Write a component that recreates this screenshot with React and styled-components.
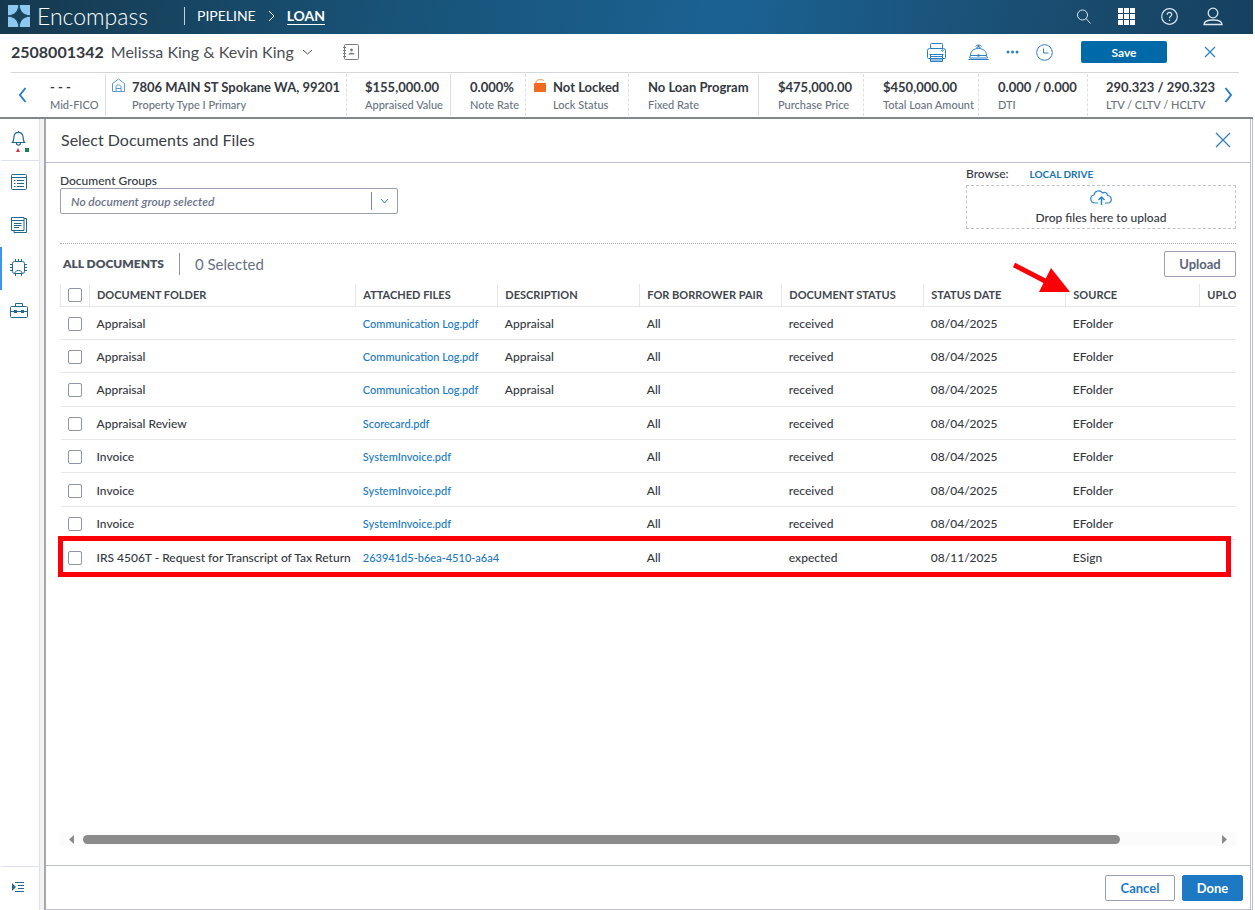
import React, { useState } from "react";
import styled, { createGlobalStyle } from "styled-components";

const GlobalStyle = createGlobalStyle`
  * {
    box-sizing: border-box;
  }

  body {
    margin: 0;
    background: #fff;
    color: #35393f;
    font-family: "Lato", "Liberation Sans", sans-serif;
    font-size: 12px;
    font-weight: 500;
    line-height: 16px;
  }

  button,
  select,
  input {
    font-family: inherit;
    margin: 0;
  }

  svg {
    flex: none;
  }
`;

const Page = styled.div`
  display: flex;
  flex-direction: column;
  min-height: 100vh;
  padding-right: 2px;
`;

const TopBar = styled.header`
  display: flex;
  align-items: center;
  height: 34px;
  padding: 0 19px 2px 8px;
  color: #fff;
  background: linear-gradient(100deg, #16394f 0%, #185378 32%, #1b6293 58%, #1a4e72 82%, #16405f 100%);
`;

const Brand = styled.div`
  display: flex;
  align-items: center;
  gap: 7px;
  width: 176px;
  font-size: 23px;
  font-weight: 300;
  line-height: 32px;
`;

const Crumbs = styled.nav`
  display: flex;
  align-items: center;
  gap: 12px;
  height: 18px;
  padding-left: 12px;
  border-left: 1px solid #c5d3de;
  font-size: 14px;
`;

const Crumb = styled.a`
  color: #fff;
  line-height: 17px;
  text-decoration: none;
  font-weight: ${({ $current }) => ($current ? 700 : 400)};
  border-bottom: 1px solid ${({ $current }) => ($current ? "#fff" : "transparent")};
`;

const Spacer = styled.div`
  flex: 1;
`;

const IconButton = styled.button`
  display: flex;
  align-items: center;
  justify-content: center;
  flex: none;
  width: ${({ $width }) => $width || 43}px;
  height: 30px;
  padding: 0;
  border: none;
  background: none;
  color: ${({ $color }) => $color || "#2d7fc4"};
`;

const LoanBar = styled.div`
  display: flex;
  align-items: center;
  height: 39px;
  margin: 0 14px 0 11px;
  padding: 0 8px 2px 0;
  border-bottom: 1px solid #d4d7da;
`;

const LoanNumber = styled.span`
  font-size: 16px;
  font-weight: 700;
  line-height: 20px;
  margin-right: 7px;
`;

const Borrower = styled.button`
  display: flex;
  align-items: center;
  gap: 8px;
  padding: 0;
  border: none;
  background: none;
  color: #4a4e54;
  font-size: 16px;
  line-height: 20px;
  margin-right: 22px;
`;

const SaveButton = styled.button`
  width: 86px;
  height: 22px;
  margin: 0 21px 0 18px;
  border: none;
  border-radius: 2px;
  background: #006aa9;
  color: #fff;
  font-size: 12px;
  font-weight: 700;
`;

const Summary = styled.section`
  display: flex;
  align-items: center;
  height: 46px;
  border-bottom: 2px solid #80878d;
  padding: 0 15px 0 2px;
`;

const SummaryList = styled.div`
  display: grid;
  grid-template-columns: 64fr 241fr 104fr 75fr 103fr 130fr 105fr 115fr 109fr 130fr;
  flex: 1;
  min-width: 0;
  height: 42px;
`;

const SummaryCell = styled.div`
  display: flex;
  gap: 7px;
  min-width: 0;
  padding: 4px 0 0 ${({ $pad }) => $pad}px;
  border-right: 1px ${({ $line }) => $line || "dashed"} #dcdfe2;
  white-space: nowrap;

  &:last-child {
    border-right: none;
  }
`;

const SummaryValue = styled.div`
  font-size: 13px;
  font-weight: 700;
  line-height: 18px;
`;

const SummaryLabel = styled.div`
  color: #6a747f;
  font-size: 11px;
  line-height: 18px;
`;

const Body = styled.div`
  display: flex;
  flex: 1;
`;

const Rail = styled.nav`
  display: flex;
  flex-direction: column;
  flex: none;
  width: 40px;
  border-right: 1px solid #dfe1e6;
`;

const RailItem = styled.button`
  display: flex;
  align-items: center;
  justify-content: center;
  width: 39px;
  height: 43px;
  padding: 0 4px 2px 0;
  border: none;
  border-left: 2px solid ${({ $active }) => ($active ? "#3d96e8" : "transparent")};
  background: none;
  color: #23698f;
`;

const AlertItem = styled(RailItem)`
  height: 42px;
  padding: 5px 4px 0 0;
  border-bottom: 1px solid #dfe1ec;
`;

const CollapseItem = styled(RailItem)`
  height: 44px;
  margin-top: auto;
  padding: 0 6px 4px 0;
  border-top: 1px solid #dfe1ec;
`;

const PanelArea = styled.div`
  display: flex;
  flex: 1;
  min-width: 0;
  background: #f3f3f4;
`;

const Panel = styled.main`
  display: flex;
  flex-direction: column;
  flex: 1;
  min-width: 0;
  margin-left: 4px;
  border-left: 2px solid #a4a8ae;
  border-right: 3px double #b9c0d2;
  border-bottom: 1px solid #b9bfcc;
  background: #fff;
`;

const PanelHeader = styled.div`
  display: flex;
  align-items: center;
  justify-content: space-between;
  height: 44px;
  padding: 0 6px 1px 15px;
  border-bottom: 1px solid #bcc1d0;
`;

const Title = styled.h1`
  margin: 0;
  color: #3c4046;
  font-size: 16px;
  font-weight: 400;
  line-height: 20px;
`;

const Content = styled.div`
  display: flex;
  flex: 1;
  flex-direction: column;
  padding: 0 14px 19px 14px;
`;

const Source = styled.div`
  display: flex;
  justify-content: space-between;
  height: 81px;
  border-bottom: 1px dotted #a9adb3;
`;

const Field = styled.div`
  width: 338px;
  padding-top: 11px;

  label {
    display: block;
    line-height: 14px;
  }
`;

const SelectBox = styled.div`
  position: relative;
  height: 26px;

  select {
    width: 100%;
    height: 26px;
    padding: 0 40px 0 10px;
    appearance: none;
    border: 1px solid #989fb3;
    border-radius: 2px;
    background: #fff;
    color: #6b7489;
    font-size: 12px;
    font-style: italic;
    font-weight: 600;
  }
`;

const SelectMark = styled.span`
  position: absolute;
  top: 4px;
  right: 1px;
  display: flex;
  align-items: center;
  justify-content: center;
  width: 26px;
  height: 18px;
  border-left: 1px solid #7c849c;
  color: #2d7fc4;
  pointer-events: none;
`;

const Browse = styled.div`
  width: 270px;
  padding-top: 3px;
`;

const BrowseRow = styled.div`
  display: flex;
  gap: 21px;
  height: 19px;

  a {
    color: #1575ae;
    font-size: 10px;
    font-weight: 700;
    text-decoration: none;
  }
`;

const DropZone = styled.div`
  display: flex;
  flex-direction: column;
  align-items: center;
  gap: 4px;
  height: 44px;
  padding-top: 4px;
  border: 1px dashed #bfc3cf;
`;

const ListHeader = styled.div`
  display: flex;
  align-items: center;
  height: 40px;
  padding-left: 3px;
`;

const ListTitle = styled.h2`
  margin: 0 15px 0 0;
  color: #4b525c;
  font-size: 12px;
  font-weight: 800;
`;

const Selected = styled.span`
  padding-left: 15px;
  border-left: 1px solid #8d94a6;
  color: #697184;
  font-size: 15px;
  font-weight: 400;
  line-height: 22px;
`;

const BoxButton = styled.button`
  width: ${({ $width }) => $width}px;
  height: 26px;
  padding: 0;
  border: 1px solid ${({ $primary }) => ($primary ? "#1e79c4" : "#989fb3")};
  border-radius: 2px;
  background: ${({ $primary }) => ($primary ? "#1e79c4" : "#fff")};
  color: ${({ $primary, $color }) => ($primary ? "#fff" : $color)};
  font-size: 13px;
  font-weight: 700;
`;

const TableArea = styled.div`
  position: relative;
`;

const TableClip = styled.div`
  overflow: hidden;
`;

const Table = styled.table`
  width: 109%;
  height: 289px;
  border-collapse: collapse;
  table-layout: fixed;

  th,
  td {
    border-bottom: 1px solid #e6e7e9;
    text-align: left;
    white-space: nowrap;
  }

  th {
    height: 22px;
    padding: 0 0 0 7px;
    border-left: 1px solid #e6e7e9;
    color: #41464e;
    font-size: 11px;
    font-weight: 700;
  }

  td {
    height: 33px;
    padding: 2px 0 0 7px;
  }

  tbody tr:last-child td {
    border-bottom: none;
  }

  td a {
    color: #2079c2;
    font-size: 11px;
    text-decoration: none;
  }
`;

const Col = styled.col`
  width: ${({ $width }) => ($width ? `${$width}px` : "auto")};
`;

const Check = styled.input`
  display: block;
  width: 14px;
  height: 14px;
  appearance: none;
  border: 1px solid #8e95ab;
  border-radius: 2px;
  background: #fff;

  &:checked {
    background: #1e79c4;
  }
`;

const Highlight = styled.div`
  position: absolute;
  top: 252px;
  left: -2px;
  right: 5px;
  height: 41px;
  border: 5px solid #fb0007;
  pointer-events: none;
`;

const Pointer = styled.svg`
  position: absolute;
  top: -22px;
  right: 165px;
`;

const ScrollBar = styled.div`
  display: flex;
  align-items: center;
  gap: 9px;
  height: 14px;
  margin-top: auto;
  padding: 0 9px;
  background: #fbfbfb;
`;

const Track = styled.div`
  flex: 1;
  height: 9px;
`;

const Thumb = styled.div`
  width: calc(100% / 1.09);
  height: 9px;
  border-radius: 5px;
  background: #8b8b8b;
`;

const Footer = styled.footer`
  display: flex;
  align-items: center;
  justify-content: flex-end;
  gap: 7px;
  height: 44px;
  padding: 0 7px;
  border-top: 1px solid #bcc1d0;
`;

const Icon = ({ size = 20, width, height, children, sw = 1 }) => (
  <svg
    width={width || size}
    height={height || size}
    viewBox={`0 0 ${width || size} ${height || size}`}
    fill="none"
    stroke="currentColor"
    strokeWidth={sw}
    aria-hidden="true"
  >
    {children}
  </svg>
);

const LogoMark = () => (
  <svg width="22" height="22" viewBox="0 0 22 22" aria-hidden="true">
    <rect width="22" height="22" fill="#8cc8ef" />
    <path
      d="M11 0C12 7 15 10 22 11C15 12 12 15 11 22C10 15 7 12 0 11C7 10 10 7 11 0Z"
      fill="#17425c"
      stroke="#17425c"
      strokeWidth="1"
    />
  </svg>
);

const ChevronDown = ({ width = 11 }) => (
  <Icon width={width} height={6}>
    <path d={`M1 1L${width / 2} 5L${width - 1} 1`} />
  </Icon>
);

const Cross = ({ size }) => (
  <Icon size={size} sw={1.2}>
    <path d={`M1 1L${size - 1} ${size - 1}M${size - 1} 1L1 ${size - 1}`} />
  </Icon>
);

const SearchIcon = () => (
  <Icon size={16}>
    <circle cx="6.5" cy="7" r="5" />
    <path d="M10 10.5L14.5 15.5" />
  </Icon>
);

const GridIcon = () => (
  <Icon size={17}>
    <path
      d="M0 0h5v5H0zM6 0h5v5H6zM12 0h5v5h-5zM0 6h5v5H0zM6 6h5v5H6zM12 6h5v5h-5zM0 12h5v5H0zM6 12h5v5H6zM12 12h5v5h-5z"
      fill="currentColor"
      stroke="none"
    />
  </Icon>
);

const HelpIcon = () => (
  <Icon size={17} sw={1.2}>
    <circle cx="8.5" cy="8.5" r="7.8" />
    <path d="M6.2 6.8C6.2 3.6 10.9 3.8 10.8 6.6C10.8 8.3 8.5 8.3 8.5 10.3" />
    <path d="M8.5 11.6v1.4" />
  </Icon>
);

const UserIcon = () => (
  <Icon width={20} height={19} sw={1.3}>
    <circle cx="10" cy="6" r="4.8" />
    <path d="M1 17.5C1 14.5 4 13 10 13C16 13 19 14.5 19 17.5Z" />
  </Icon>
);

const ContactIcon = () => (
  <Icon size={16}>
    <rect x="1.5" y="0.5" width="14" height="15" rx="1" />
    <path d="M0 3.5h3M0 6.5h3M0 9.5h3M0 12.5h3" />
    <circle cx="8.5" cy="6" r="1.4" fill="currentColor" stroke="none" />
    <path d="M5.5 10.5C5.5 8 11.5 8 11.5 10.5Z" fill="currentColor" stroke="none" />
  </Icon>
);

const PrinterIcon = () => (
  <Icon width={19} height={19}>
    <path d="M3.5 5.5V1.5a1 1 0 0 1 1-1h10a1 1 0 0 1 1 1V5.5M3.5 15.5h-2a1 1 0 0 1-1-1v-7a2 2 0 0 1 2-2h14a2 2 0 0 1 2 2v7a1 1 0 0 1-1 1h-2" />
    <path d="M2.5 11.5h14M3.5 11.5h12v7h-12zM3.5 13.5h12M3.5 15.5h12M3.5 17h12" />
    <circle cx="15.5" cy="7.5" r="0.8" />
  </Icon>
);

const ServiceBellIcon = () => (
  <Icon width={21} height={17}>
    <path d="M2.5 11.5C2.5 7.5 5.500 4.500 10.500 4.500S18.500 7.500 18.500 11.500M2.500 11.500h16l1 2.500h-18zM0.500 15.500h20M9 4.500V3h3v1.500M7.500 2.500C9 0.500 12 0.500 13.500 2.500" />
    <circle cx="10.5" cy="2" r="1" fill="currentColor" stroke="none" />
    <circle cx="10.5" cy="11.5" r="1.3" fill="currentColor" stroke="none" />
  </Icon>
);

const DotsIcon = () => (
  <Icon width={13} height={4}>
    <g fill="currentColor" stroke="none">
      <circle cx="2" cy="2" r="1.5" />
      <circle cx="6.5" cy="2" r="1.5" />
      <circle cx="11" cy="2" r="1.5" />
    </g>
  </Icon>
);

const ClockIcon = () => (
  <Icon size={17}>
    <circle cx="8.5" cy="8.5" r="7.8" />
    <path d="M7.5 4.5v4.500h5" />
  </Icon>
);

const SideArrow = ({ right }) => (
  <Icon width={9} height={16} sw={2}>
    <path d={right ? "M1.5 1L7 8L1.5 15" : "M7.5 1L2 8L7.5 15"} />
  </Icon>
);

const HouseIcon = () => (
  <Icon width={13} height={15}>
    <g stroke="#5b9bd5">
      <path d="M0.5 5.5L6.5 1L12.5 5.5V13.5H0.5Z" />
      <path d="M4 13.5V8.5C4 6.5 9 6.5 9 8.5V13.5M4 10.5h5" />
    </g>
  </Icon>
);

const UnlockIcon = () => (
  <Icon width={12} height={15}>
    <rect y="5" width="12" height="9" rx="1" fill="#f26a21" stroke="none" />
    <path d="M2 5V4C2 1 9.5 1 10 3" stroke="#f58d55" />
  </Icon>
);

const AlertIcon = () => (
  <Icon width={20} height={24}>
    <path
      d="M3.500 12.500C5 11 4.800 8 5 6.500C5.300 3.500 7.200 2.300 9.500 2.300S13.700 3.500 14 6.500C14.200 8 14 11 15.500 12.500ZM7.500 13C7.500 15.800 11.500 15.800 11.500 13M9.500 1v1.300"
      strokeWidth="1.2"
    />
    <path d="M9 18L7 22h4z" fill="#d8304a" stroke="none" />
    <path d="M16 18h4v4h-4z" fill="#178254" stroke="none" />
  </Icon>
);

const FormIcon = () => (
  <Icon size={16}>
    <rect x="0.5" y="0.5" width="15" height="15" rx="1" />
    <path d="M0.5 3.5h15M6 6.5h7M6 9.5h7M6 12.5h7M3 6.5h1.5M3 9.5h1.5M3 12.5h1.5" />
  </Icon>
);

const DocsIcon = () => (
  <Icon size={16}>
    <path d="M0.5 0.5h12.5v13h-12.5zM0.5 3.5h12.5M3 6.5h7.5M3 8.5h7.5M3 10.5h5M13 1.5h2.5v14h-12.5v-2" />
  </Icon>
);

const ChipIcon = () => (
  <Icon size={17}>
    <rect x="2.5" y="2.5" width="12" height="12" rx="2" />
    <path d="M5.5 0v2.5M8.5 0v2.5M11.5 0v2.5M0 5.5h2.5M0 8.5h2.5M0 11.5h2.5M14.5 5.5h2.5M14.5 8.5h2.5M14.5 11.5h2.5M5.5 14.5v2.5M11.5 14.5v2.5" />
    <path d="M5 14.5C4.500 10.500 12.500 10.500 12 14.500" />
  </Icon>
);

const CaseIcon = () => (
  <Icon width={18} height={15}>
    <rect x="0.5" y="3.5" width="17" height="11" rx="1" />
    <path d="M5.5 3.5v-3h7v3M0.5 8.5h17" />
    <path d="M4 7h3v3h-3zM11 7h3v3h-3z" fill="currentColor" stroke="none" />
  </Icon>
);

const ExpandIcon = () => (
  <Icon width={12} height={10}>
    <path d="M0 1L4 5L0 9Z" fill="currentColor" stroke="none" />
    <path d="M3 0.5h9M6 3.5h6M6 6.5h6M3 9.5h9" />
  </Icon>
);

const CloudIcon = () => (
  <Icon width={22} height={16}>
    <g stroke="#2d86cb">
      <path
        d="M8 13H5.500C-0.500 13 -0.500 5.500 4 5C4.500 0.500 10.500 -0.500 12.500 3C15 1.500 17.500 3 17.500 5.500C22.500 6 22.500 13 18 13H15"
        strokeWidth="1.2"
      />
      <path d="M11.5 15V7.5M8.5 10L11.5 7L14.5 10" strokeWidth="1.5" />
    </g>
  </Icon>
);

const summary = [
  { value: "- - -", label: "Mid-FICO", pad: 8, line: "solid" },
  {
    value: "7806 MAIN ST Spokane WA, 99201",
    label: "Property Type I Primary",
    pad: 6,
    icon: <HouseIcon />,
  },
  { value: "$155,000.00", label: "Appraised Value", pad: 18, line: "solid" },
  { value: "0.000%", label: "Note Rate", pad: 19 },
  { value: "Not Locked", label: "Lock Status", pad: 8, icon: <UnlockIcon /> },
  { value: "No Loan Program", label: "Fixed Rate", pad: 19, line: "solid" },
  { value: "$475,000.00", label: "Purchase Price", pad: 19 },
  { value: "$450,000.00", label: "Total Loan Amount", pad: 19 },
  { value: "0.000 / 0.000", label: "DTI", pad: 19 },
  { value: "290.323 / 290.323", label: "LTV / CLTV / HCLTV", pad: 18 },
];

const columns = [
  { title: "DOCUMENT FOLDER" },
  { title: "ATTACHED FILES", width: 142 },
  { title: "DESCRIPTION", width: 142 },
  { title: "FOR BORROWER PAIR", width: 142 },
  { title: "DOCUMENT STATUS", width: 142 },
  { title: "STATUS DATE", width: 142 },
  { title: "SOURCE", width: 134 },
  { title: "UPLO", width: 142 },
];

const documents = [
  ["Appraisal", "Communication Log.pdf", "Appraisal", "All", "received", "08/04/2025", "EFolder"],
  ["Appraisal", "Communication Log.pdf", "Appraisal", "All", "received", "08/04/2025", "EFolder"],
  ["Appraisal", "Communication Log.pdf", "Appraisal", "All", "received", "08/04/2025", "EFolder"],
  ["Appraisal Review", "Scorecard.pdf", "", "All", "received", "08/04/2025", "EFolder"],
  ["Invoice", "SystemInvoice.pdf", "", "All", "received", "08/04/2025", "EFolder"],
  ["Invoice", "SystemInvoice.pdf", "", "All", "received", "08/04/2025", "EFolder"],
  ["Invoice", "SystemInvoice.pdf", "", "All", "received", "08/04/2025", "EFolder"],
  [
    "IRS 4506T - Request for Transcript of Tax Return",
    "263941d5-b6ea-4510-a6a4",
    "",
    "All",
    "expected",
    "08/11/2025",
    "ESign",
  ],
];

const DocumentTable = ({ selected, toggle, toggleAll }) => (
  <Table>
    <colgroup>
      <Col $width={29} />
      {columns.map((column) => (
        <Col key={column.title} $width={column.width} />
      ))}
    </colgroup>
    <thead>
      <tr>
        <th>
          <Check
            type="checkbox"
            aria-label="Select all"
            checked={selected.length === documents.length}
            onChange={toggleAll}
          />
        </th>
        {columns.map((column) => (
          <th key={column.title}>{column.title}</th>
        ))}
      </tr>
    </thead>
    <tbody>
      {documents.map(([folder, file, ...rest], row) => (
        <tr key={row}>
          <td>
            <Check
              type="checkbox"
              aria-label={`Select ${folder}`}
              checked={selected.includes(row)}
              onChange={() => toggle(row)}
            />
          </td>
          <td>{folder}</td>
          <td>
            <a href="#file">{file}</a>
          </td>
          {rest.map((text, i) => (
            <td key={i}>{text}</td>
          ))}
          <td />
        </tr>
      ))}
    </tbody>
  </Table>
);

const App = () => {
  const [selected, setSelected] = useState([]);

  const toggle = (row) =>
    setSelected((rows) => (rows.includes(row) ? rows.filter((r) => r !== row) : [...rows, row]));

  const toggleAll = () =>
    setSelected((rows) => (rows.length === documents.length ? [] : documents.map((_, i) => i)));

  return (
    <Page>
      <GlobalStyle />
      <TopBar>
        <Brand>
          <LogoMark />
          Encompass
        </Brand>
        <Crumbs>
          <Crumb href="#pipeline">PIPELINE</Crumb>
          <Icon width={7} height={12}>
            <path d="M1 1L6 6L1 11" />
          </Icon>
          <Crumb href="#loan" $current>
            LOAN
          </Crumb>
        </Crumbs>
        <Spacer />
        <IconButton $color="#dbe6ee" aria-label="Search">
          <SearchIcon />
        </IconButton>
        <IconButton $color="#fff" aria-label="Apps">
          <GridIcon />
        </IconButton>
        <IconButton $color="#dbe6ee" aria-label="Help">
          <HelpIcon />
        </IconButton>
        <IconButton $color="#dbe6ee" aria-label="Account">
          <UserIcon />
        </IconButton>
      </TopBar>

      <LoanBar>
        <LoanNumber>2508001342</LoanNumber>
        <Borrower>
          Melissa King &amp; Kevin King
          <ChevronDown />
        </Borrower>
        <IconButton $width={32} $color="#777b80" aria-label="Contacts">
          <ContactIcon />
        </IconButton>
        <Spacer />
        <IconButton $width={42} aria-label="Print">
          <PrinterIcon />
        </IconButton>
        <IconButton $width={42} aria-label="Services">
          <ServiceBellIcon />
        </IconButton>
        <IconButton $width={26} aria-label="More">
          <DotsIcon />
        </IconButton>
        <IconButton $width={38} aria-label="History">
          <ClockIcon />
        </IconButton>
        <SaveButton>Save</SaveButton>
        <IconButton aria-label="Close loan">
          <Cross size={12} />
        </IconButton>
      </LoanBar>

      <Summary>
        <IconButton $width={40} aria-label="Previous">
          <SideArrow />
        </IconButton>
        <SummaryList>
          {summary.map(({ value, label, pad, line, icon }) => (
            <SummaryCell key={label} $pad={pad} $line={line}>
              {icon}
              <div>
                <SummaryValue>{value}</SummaryValue>
                <SummaryLabel>{label}</SummaryLabel>
              </div>
            </SummaryCell>
          ))}
        </SummaryList>
        <IconButton $width={20} aria-label="Next">
          <SideArrow right />
        </IconButton>
      </Summary>

      <Body>
        <Rail>
          <AlertItem aria-label="Alerts">
            <AlertIcon />
          </AlertItem>
          <RailItem aria-label="Forms">
            <FormIcon />
          </RailItem>
          <RailItem aria-label="Documents">
            <DocsIcon />
          </RailItem>
          <RailItem aria-label="Services" $active>
            <ChipIcon />
          </RailItem>
          <RailItem aria-label="Tools">
            <CaseIcon />
          </RailItem>
          <CollapseItem aria-label="Expand menu">
            <ExpandIcon />
          </CollapseItem>
        </Rail>

        <PanelArea>
          <Panel>
            <PanelHeader>
              <Title>Select Documents and Files</Title>
              <IconButton aria-label="Close">
                <Cross size={16} />
              </IconButton>
            </PanelHeader>

            <Content>
              <Source>
                <Field>
                  <label htmlFor="groups">Document Groups</label>
                  <SelectBox>
                    <select id="groups">
                      <option>No document group selected</option>
                    </select>
                    <SelectMark>
                      <ChevronDown width={9} />
                    </SelectMark>
                  </SelectBox>
                </Field>
                <Browse>
                  <BrowseRow>
                    <span>Browse:</span>
                    <a href="#local">LOCAL DRIVE</a>
                  </BrowseRow>
                  <DropZone>
                    <CloudIcon />
                    Drop files here to upload
                  </DropZone>
                </Browse>
              </Source>

              <ListHeader>
                <ListTitle>ALL DOCUMENTS</ListTitle>
                <Selected>{selected.length} Selected</Selected>
                <Spacer />
                <BoxButton $width={72} $color="#5b6478">
                  Upload
                </BoxButton>
              </ListHeader>

              <TableArea>
                <TableClip>
                  <DocumentTable selected={selected} toggle={toggle} toggleAll={toggleAll} />
                </TableClip>
                <Highlight />
                <Pointer width="58" height="32" viewBox="0 0 58 32" aria-hidden="true">
                  <path d="M1 3L36 21" stroke="#fb0007" strokeWidth="5" />
                  <path d="M38 6L57 30L26 30Z" fill="#fb0007" />
                </Pointer>
              </TableArea>

              <ScrollBar>
                <Icon width={5} height={9}>
                  <path d="M5 0V9L0 4.5Z" fill="#8b8b8b" stroke="none" />
                </Icon>
                <Track>
                  <Thumb />
                </Track>
                <Icon width={5} height={9}>
                  <path d="M0 0V9L5 4.5Z" fill="#8b8b8b" stroke="none" />
                </Icon>
              </ScrollBar>
            </Content>

            <Footer>
              <BoxButton $width={70} $color="#1e79c4">
                Cancel
              </BoxButton>
              <BoxButton $width={61} $primary>
                Done
              </BoxButton>
            </Footer>
          </Panel>
        </PanelArea>
      </Body>
    </Page>
  );
};

export default App;
